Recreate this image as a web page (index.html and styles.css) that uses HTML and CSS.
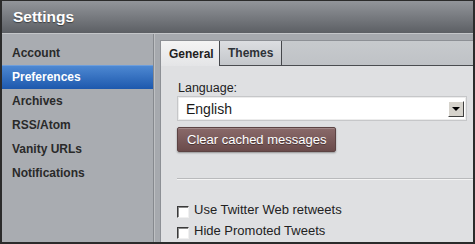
FILE: index.html
```html
<!DOCTYPE html>
<html>

<head>
    <title>Settings</title>
    <link rel="stylesheet" href="styles.css">
</head>

<body>
    <div class="window">
        <div class="header">
            <h1>Settings</h1>
        </div>

        <div class="main">
            <ul class="sidebar">
                <li>Account</li>
                <li class="selected">Preferences</li>
                <li>Archives</li>
                <li>RSS/Atom</li>
                <li>Vanity URLs</li>
                <li>Notifications</li>
            </ul>

            <div class="content">
                <div class="panel">
                    <div class="tabs">
                        <div class="tab active">General</div>
                        <div class="tab">Themes</div>
                    </div>

                    <div class="panel-body">
                        <label class="field-label">Language:</label>
                        <div class="select">
                            <span class="select-value">English</span>
                            <span class="select-arrow"></span>
                        </div>
                        <button class="btn">Clear cached messages</button>

                        <div class="separator"></div>

                        <div class="options">
                            <div class="option">
                                <span class="checkbox"></span>
                                <span>Use Twitter Web retweets</span>
                            </div>
                            <div class="option">
                                <span class="checkbox"></span>
                                <span>Hide Promoted Tweets</span>
                            </div>
                        </div>
                    </div>
                </div>
            </div>
        </div>
    </div>
</body>

</html>
```

FILE: styles.css
```css
body {
    margin: 0;
    font-family: "Liberation Sans", Arial, sans-serif;
    background-color: #2b2b2b;
}

.window {
    width: 475px;
    height: 244px;
    box-sizing: border-box;
    border: 2px solid #2b2b2b;
    border-top-width: 1px;
    display: flex;
    flex-direction: column;
    overflow: hidden;
    background-color: #a8abb0;
}

.header {
    height: 33px;
    flex-shrink: 0;
    background: linear-gradient(#92959a, #5c5f64);
    border-bottom: 1px solid #c4c6c9;
    box-sizing: border-box;
    display: flex;
    align-items: center;
    padding-left: 11px;
}

.header h1 {
    margin: 0;
    color: #fff;
    font-size: 15.5px;
    font-weight: bold;
    text-shadow: 0 1px 1px rgba(0, 0, 0, 0.45);
}

.main {
    flex: 1;
    display: flex;
    min-height: 0;
}

.sidebar {
    list-style: none;
    margin: 0;
    padding: 7px 0 0;
    width: 152px;
    flex-shrink: 0;
    box-sizing: border-box;
    background-color: #a9acb1;
    border-right: 1px solid #86898e;
}

.sidebar li {
    height: 24px;
    line-height: 24px;
    padding-left: 10px;
    font-size: 12px;
    font-weight: bold;
    color: #2a2a2a;
}

.sidebar li.selected {
    color: #fff;
    background: linear-gradient(#4d88d2, #1d58ad);
    border-top: 1px solid #6e9edb;
    height: 23px;
    line-height: 22px;
}

.content {
    flex: 1;
    display: flex;
    padding: 6px 0 0 5px;
    background-color: #a6a9ae;
    border-left: 1px solid #bec0c3;
}

.panel {
    flex: 1;
    background-color: #dfe0e2;
    border-left: 1px solid #8d9095;
    display: flex;
    flex-direction: column;
}

.tabs {
    height: 26px;
    flex-shrink: 0;
    display: flex;
    box-sizing: border-box;
    background: linear-gradient(#c7cacd, #bfc2c6);
    border-top: 1px solid #8d9095;
    border-bottom: 1px solid #4a4c50;
}

.tab {
    padding: 0 8px;
    font-size: 12px;
    font-weight: bold;
    line-height: 25px;
    color: #2e3238;
    border-right: 1px solid #45474b;
    background: linear-gradient(#dcdee1, #c4c7cb);
}

.tab.active {
    width: 59px;
    padding: 0 0 0 8px;
    box-sizing: border-box;
    color: #1e1e1e;
    background: linear-gradient(#f4f4f4, #e4e5e7);
    margin-bottom: -1px;
    line-height: 27px;
}

.tab:not(.active) {
    width: 62px;
    box-sizing: border-box;
}

.panel-body {
    padding: 14px 0 0 16px;
}

.field-label {
    display: block;
    padding-left: 1px;
    font-size: 12.5px;
    line-height: 16px;
    color: #222;
}

.select {
    width: 290px;
    height: 25px;
    box-sizing: border-box;
    display: flex;
    align-items: center;
    background-color: #fff;
    border: 1px solid #c6c7c9;
    box-shadow: inset 0 0 0 1px #ececec;
    padding: 0 2px 0 8px;
}

.select-value {
    flex: 1;
    font-size: 14px;
    color: #1a1a1a;
}

.select-arrow {
    width: 16px;
    height: 16px;
    box-sizing: border-box;
    background-color: #d6d3cc;
    border: 1px solid;
    border-color: #fff #404040 #404040 #fff;
    display: flex;
    align-items: center;
    justify-content: center;
}

.select-arrow::after {
    content: "";
    border-left: 4px solid transparent;
    border-right: 4px solid transparent;
    border-top: 4px solid #000;
}

.btn {
    display: block;
    margin-top: 6px;
    width: 159px;
    height: 25px;
    padding: 0 0 0 9px;
    text-align: left;
    font-family: "Liberation Sans", Arial, sans-serif;
    font-size: 13px;
    color: #fff;
    text-shadow: 0 1px 0 rgba(0, 0, 0, 0.4);
    background: linear-gradient(#8a6a6a, #6a4b4b);
    border: 1px solid #5c4343;
    border-radius: 2px;
    box-shadow: inset 0 1px 0 rgba(255, 255, 255, 0.2), 0 1px 2px rgba(0, 0, 0, 0.35);
    cursor: pointer;
}

.separator {
    margin-top: 26px;
    height: 1px;
    background-color: #b9babc;
    border-bottom: 1px solid #f4f4f4;
}

.options {
    margin-top: 21px;
}

.option {
    display: flex;
    align-items: flex-start;
    height: 21px;
    font-size: 13px;
    line-height: 17px;
    color: #222;
}

.checkbox {
    width: 12px;
    height: 12px;
    margin-top: 5px;
    margin-right: 5px;
    box-sizing: border-box;
    background-color: #fff;
    border: 1px solid;
    border-color: #3a3a3a #f0f0f0 #f0f0f0 #3a3a3a;
    box-shadow: inset 1px 1px 0 #8a8a8a;
}
```
